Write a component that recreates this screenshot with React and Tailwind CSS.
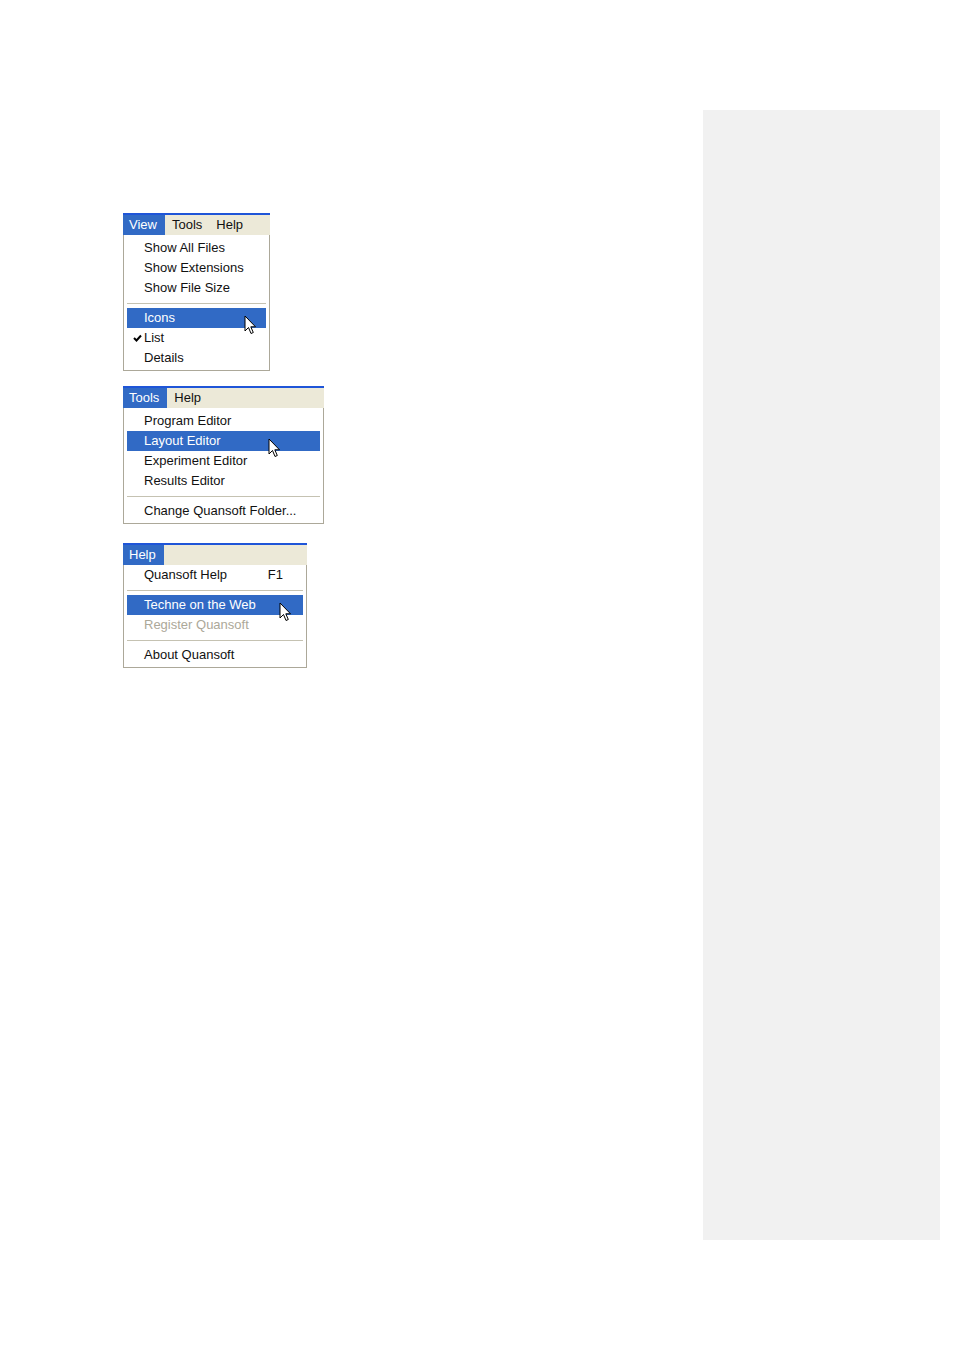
import React from 'react';

const font = { fontFamily: '"Liberation Sans", Arial, sans-serif' };

const Cursor = ({ className }) => (
  <svg className={className} width="13" height="21" viewBox="0 0 13 21">
    <path
      d="M1 1 L1 16 L4.5 12.5 L7 18.5 L9.3 17.5 L6.8 11.8 L11.5 11.8 Z"
      fill="#fff"
      stroke="#000"
      strokeWidth="1"
      strokeLinejoin="round"
    />
  </svg>
);

const Check = () => (
  <svg className="absolute left-[6px] top-[6px]" width="9" height="8" viewBox="0 0 9 8">
    <path d="M1 4 L3.5 6.5 L8 1.5" fill="none" stroke="#000" strokeWidth="2" />
  </svg>
);

const Item = ({ item }) => {
  if (item.sep) {
    return (
      <div className="h-[10px] flex items-center px-[3px]">
        <div className="h-px w-full bg-[#c5c2b2]" />
      </div>
    );
  }
  return (
    <div
      className={`relative h-[20px] mx-[3px] flex items-center pl-[17px] pr-[20px] text-[13px] ${
        item.active ? 'bg-[#316ac5] text-white' : item.disabled ? 'text-[#aca899]' : 'text-[#111]'
      }`}
    >
      {item.checked && <Check />}
      <span className="flex-1 whitespace-nowrap">{item.label}</span>
      {item.shortcut && <span className="whitespace-nowrap">{item.shortcut}</span>}
      {item.cursor && <Cursor className={`absolute top-[7px] ${item.cursor}`} />}
    </div>
  );
};

const Menu = ({ width, tabs, items, tight }) => (
  <div className="flex flex-col" style={{ width }}>
    <div className="h-[2px] bg-[#1f55d8]" />
    <div className="h-[20px] flex bg-[#ece9d8] text-[13px]">
      {tabs.map((t, i) => (
        <div
          key={t}
          className={`flex items-center ${i === 0 ? 'bg-[#316ac5] text-white pl-[6px] pr-[8px]' : 'text-[#111] px-[7px]'}`}
        >
          {t}
        </div>
      ))}
    </div>
    <div className={`bg-white border border-t-0 border-[#aca899] pb-[2px] ${tight ? 'pt-0' : 'pt-[3px]'}`}>
      {items.map((it, i) => (
        <Item key={i} item={it} />
      ))}
    </div>
  </div>
);

export default function App() {
  return (
    <div className="w-[954px] h-[1350px] bg-white flex pt-[110px]" style={font}>
      <div className="w-[703px] pl-[123px] pt-[103px] flex flex-col">
        <Menu
          width={147}
          tabs={['View', 'Tools', 'Help']}
          items={[
            { label: 'Show All Files' },
            { label: 'Show Extensions' },
            { label: 'Show File Size' },
            { sep: true },
            { label: 'Icons', active: true, cursor: 'left-[117px]' },
            { label: 'List', checked: true },
            { label: 'Details' },
          ]}
        />
        <div className="h-[15px]" />
        <Menu
          width={201}
          tabs={['Tools', 'Help']}
          items={[
            { label: 'Program Editor' },
            { label: 'Layout Editor', active: true, cursor: 'left-[141px]' },
            { label: 'Experiment Editor' },
            { label: 'Results Editor' },
            { sep: true },
            { label: 'Change Quansoft Folder...' },
          ]}
        />
        <div className="h-[19px]" />
        <Menu
          width={184}
          tight
          tabs={['Help']}
          items={[
            { label: 'Quansoft Help', shortcut: 'F1' },
            { sep: true },
            { label: 'Techne on the Web', active: true, cursor: 'left-[152px]' },
            { label: 'Register Quansoft', disabled: true },
            { sep: true },
            { label: 'About Quansoft' },
          ]}
        />
      </div>
      <div className="w-[237px] h-[1130px] bg-[#f1f1f1]" />
    </div>
  );
}
